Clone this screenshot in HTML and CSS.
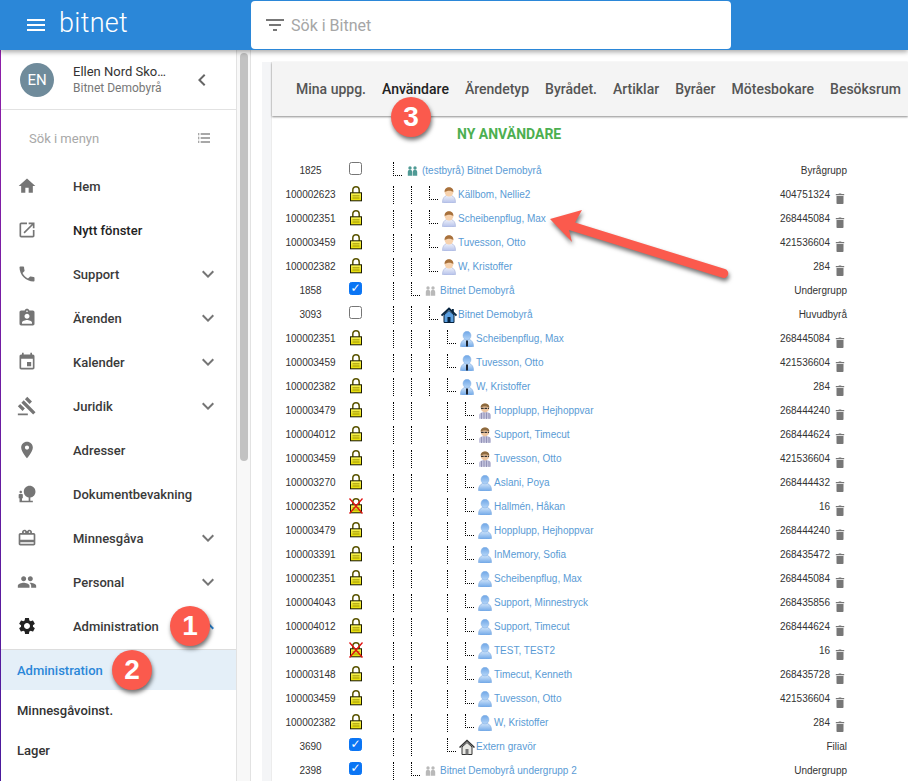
FILE: index.html
```html
<!DOCTYPE html>
<html lang="sv">
<head>
<meta charset="utf-8">
<title>bitnet</title>
<link rel="stylesheet" href="styles.css">
</head>
<body>
<svg class="defs" aria-hidden="true">
  <defs>
    <linearGradient id="gBlue" x1="0" y1="0" x2="0" y2="1"><stop offset="0" stop-color="#cfe3fa"/><stop offset="1" stop-color="#6fa8e8"/></linearGradient>
    <linearGradient id="gHead" x1="0" y1="0" x2="0" y2="1"><stop offset="0" stop-color="#6ea5e6"/><stop offset="1" stop-color="#b5d6f8"/></linearGradient>
    <linearGradient id="gBody" x1="0" y1="0" x2="0" y2="1"><stop offset="0" stop-color="#eef1fa"/><stop offset="1" stop-color="#b4c0ea"/></linearGradient>
    <linearGradient id="gLock" x1="0" y1="0" x2="0" y2="1"><stop offset="0" stop-color="#f8f35a"/><stop offset="1" stop-color="#e6dc00"/></linearGradient>
    <symbol id="lock" viewBox="0 0 14 16">
      <path d="M3.800 7V4C3.800 2 5 .8 7 .8s3.200 1.200 3.200 3.200V7" fill="none" stroke="#5a5400" stroke-width="1.500"/>
      <rect x="1.500" y="6.800" width="11" height="8" fill="url(#gLock)" stroke="#1a1a00"/>
      <path d="M3.500 9.800h7M3.500 12h7" stroke="#8a8200" stroke-width=".8"/>
    </symbol>
    <symbol id="lockx" viewBox="0 0 14 16">
      <use href="#lock" width="14" height="16"/>
      <path d="M.5.5l13 15M13.500.5L.5 15.500" stroke="#e01010" stroke-width="1.300"/>
    </symbol>
    <symbol id="uo" viewBox="0 0 16 16">
      <path d="M1.500 15.500c0-4 1.500-6 4-7h5c2.500 1 4 3 4 7-2 1-11 1-13 0z" fill="url(#gBody)" stroke="#a3aed8" stroke-width=".6"/>
      <ellipse cx="8" cy="5" rx="4.300" ry="4.600" fill="#f7d2ae"/>
      <path d="M3.700 5.300C3.200 1.800 5.600.3 8 .3s4.800 1.500 4.300 5C10.500 3.300 6 3.300 3.700 5.300z" fill="#a8713c"/>
    </symbol>
    <symbol id="ub" viewBox="0 0 16 16">
      <path d="M1.500 15.500c0-4 1.500-6 4-7h5c2.500 1 4 3 4 7-2 1-11 1-13 0z" fill="url(#gBlue)" stroke="#7aa9e0" stroke-width=".6"/>
      <ellipse cx="8" cy="4.600" rx="4" ry="4.400" fill="url(#gHead)" stroke="#7aa9e0" stroke-width=".4"/>
    </symbol>
    <symbol id="ut" viewBox="0 0 16 16">
      <use href="#ub" width="16" height="16"/>
      <path d="M8 9.500V15.500" stroke="#1c2430" stroke-width="2"/>
    </symbol>
    <symbol id="ug" viewBox="0 0 16 16">
      <path d="M2 15.800V12.500C2 10.300 4.500 9 8 9s6 1.300 6 3.500v3.300z" fill="#c3c3dc"/>
      <path d="M4.500 10v6M7 9.500V16M9.500 9.500V16M12 10v6" stroke="#8585ad" stroke-width=".8"/>
      <ellipse cx="8" cy="5" rx="4.300" ry="4.400" fill="#eec6a0"/>
      <path d="M3.700 4.500C3.500 1.700 5.800.4 8 .4s4.500 1.300 4.300 4.100C10 3 6 3 3.700 4.500z" fill="#8d6a3f"/>
      <path d="M4 5.400h8" stroke="#333" stroke-width="1.200" stroke-dasharray="2.700 .8"/>
    </symbol>
    <symbol id="grp" viewBox="0 0 11 10">
      <circle cx="3" cy="2" r="1.700" fill="currentColor"/><circle cx="8" cy="2" r="1.700" fill="currentColor"/>
      <path d="M.8 9.800V6c0-1.500 1-2.300 2.200-2.300S5.200 4.500 5.200 6v3.800zM5.800 9.800V6c0-1.500 1-2.300 2.200-2.300s2.200.8 2.200 2.300v3.800z" fill="currentColor"/>
    </symbol>
    <symbol id="hb" viewBox="0 0 16 16">
      <path d="M3 8v7.500h10V8L8 3.500z" fill="#5b9fe0" stroke="#06233f"/>
      <path d="M.5 8.500L8 1.500l7.500 7" fill="none" stroke="#06233f" stroke-width="1.800"/>
      <rect x="6.500" y="10" width="3" height="5.500" fill="#06233f"/>
      <rect x="11" y="2" width="1.800" height="3.500" fill="#06233f"/>
    </symbol>
    <symbol id="hg" viewBox="0 0 16 16">
      <path d="M3 8v7.500h10V8L8 3.500z" fill="#e8e8e4" stroke="#333"/>
      <path d="M.5 8.500L8 1.500l7.500 7" fill="none" stroke="#333" stroke-width="1.500"/>
      <rect x="6.500" y="10" width="3" height="5.500" fill="#777"/>
    </symbol>
    <symbol id="trash" viewBox="0 0 10 11">
      <path d="M1.500 3h7v7.200c0 .4-.3.800-.8.800H2.300c-.5 0-.8-.4-.8-.8zM.8 1h2.700l.4-.6h2.200l.4.600h2.700v1.200H.8z" fill="#777"/>
    </symbol>
    <symbol id="i-home" viewBox="0 0 24 24"><path d="M10 20v-6h4v6h5v-8h3L12 3 2 12h3v8z"/></symbol>
    <symbol id="i-open" viewBox="0 0 24 24"><path d="M19 19H5V5h7V3H5c-1.110 0-2 .9-2 2v14c0 1.100.89 2 2 2h14c1.100 0 2-.9 2-2v-7h-2v7zM14 3v2h3.590l-9.830 9.830 1.410 1.410L19 6.410V10h2V3h-7z"/></symbol>
    <symbol id="i-phone" viewBox="0 0 24 24"><path d="M6.620 10.790c1.440 2.830 3.760 5.140 6.590 6.590l2.200-2.200c.27-.27.67-.36 1.020-.24 1.120.37 2.330.57 3.570.57.55 0 1 .45 1 1V20c0 .55-.45 1-1 1-9.390 0-17-7.610-17-17 0-.55.45-1 1-1h3.500c.55 0 1 .45 1 1 0 1.250.2 2.450.57 3.570.11.35.03.74-.25 1.020l-2.200 2.200z"/></symbol>
    <symbol id="i-case" viewBox="0 0 24 24"><path d="M19 3h-4.180C14.400 1.840 13.300 1 12 1c-1.300 0-2.400.84-2.820 2H5c-1.100 0-2 .9-2 2v14c0 1.100.9 2 2 2h14c1.100 0 2-.9 2-2V5c0-1.100-.9-2-2-2zm-7 0c.55 0 1 .45 1 1s-.45 1-1 1-1-.45-1-1 .45-1 1-1zm0 4c1.660 0 3 1.340 3 3s-1.340 3-3 3-3-1.340-3-3 1.340-3 3-3zm6 12H6v-1.400c0-2 4-3.100 6-3.100s6 1.100 6 3.100V19z"/></symbol>
    <symbol id="i-event" viewBox="0 0 24 24"><path d="M17 12h-5v5h5v-5zM16 1v2H8V1H6v2H5c-1.110 0-1.990.9-1.990 2L3 19c0 1.100.89 2 2 2h14c1.100 0 2-.9 2-2V5c0-1.100-.9-2-2-2h-1V1h-2zm3 18H5V8h14v11z"/></symbol>
    <symbol id="i-gavel" viewBox="0 0 24 24"><path d="M1 21h12v2H1zM5.245 8.070l2.830-2.827 14.140 14.142-2.828 2.828zM12.317 1l5.657 5.656-2.830 2.830-5.654-5.660zM3.825 9.485l5.657 5.657-2.828 2.828-5.657-5.657z"/></symbol>
    <symbol id="i-place" viewBox="0 0 24 24"><path d="M12 2C8.130 2 5 5.130 5 9c0 5.250 7 13 7 13s7-7.750 7-13c0-3.870-3.130-7-7-7zm0 9.500c-1.380 0-2.500-1.120-2.500-2.500s1.120-2.500 2.500-2.500 2.500 1.120 2.500 2.500-1.120 2.500-2.500 2.500z"/></symbol>
    <symbol id="i-nature" viewBox="0 0 24 24"><path d="M22.170 9.170c0-3.870-3.130-7-7-7s-7 3.130-7 7c0 3.470 2.520 6.340 5.830 6.890V20H6v-3h1v-4c0-.55-.45-1-1-1H3c-.55 0-1 .45-1 1v4h1v5h16v-2h-3v-3.880c3.470-.41 6.170-3.360 6.170-6.950zM4.500 11c.83 0 1.500-.67 1.500-1.500S5.330 8 4.500 8 3 8.670 3 9.500 3.670 11 4.500 11z"/></symbol>
    <symbol id="i-gift" viewBox="0 0 24 24"><path d="M20 6h-2.180c.11-.31.18-.65.18-1 0-1.660-1.340-3-3-3-1.050 0-1.960.54-2.500 1.350l-.5.67-.5-.68C10.960 2.540 10.050 2 9 2 7.340 2 6 3.340 6 5c0 .35.07.69.18 1H4c-1.110 0-1.990.89-1.990 2L2 19c0 1.110.89 2 2 2h16c1.110 0 2-.89 2-2V8c0-1.110-.89-2-2-2zm-5-2c.55 0 1 .45 1 1s-.45 1-1 1-1-.45-1-1 .45-1 1-1zM9 4c.55 0 1 .45 1 1s-.45 1-1 1-1-.45-1-1 .45-1 1-1zm11 15H4v-2h16v2zm0-5H4V8h16v6z"/></symbol>
    <symbol id="i-people" viewBox="0 0 24 24"><path d="M16 11c1.660 0 2.990-1.340 2.990-3S17.660 5 16 5c-1.660 0-3 1.340-3 3s1.340 3 3 3zm-8 0c1.660 0 2.990-1.340 2.990-3S9.660 5 8 5C6.340 5 5 6.340 5 8s1.340 3 3 3zm0 2c-2.330 0-7 1.170-7 3.500V19h14v-2.500c0-2.330-4.670-3.500-7-3.500zm8 0c-.29 0-.62.02-.97.05 1.160.84 1.970 1.970 1.970 3.450V19h6v-2.500c0-2.330-4.670-3.500-7-3.500z"/></symbol>
    <symbol id="i-gear" viewBox="0 0 24 24"><path d="M19.140 12.940c.04-.3.060-.61.060-.94 0-.32-.02-.64-.07-.94l2.030-1.580c.18-.14.23-.41.12-.61l-1.920-3.320c-.12-.22-.37-.29-.59-.22l-2.390.96c-.5-.38-1.030-.7-1.620-.94l-.36-2.540c-.04-.24-.24-.41-.48-.41h-3.840c-.24 0-.43.17-.47.41l-.36 2.540c-.59.24-1.130.57-1.620.94l-2.390-.96c-.22-.08-.47 0-.59.22L2.740 8.870c-.12.21-.08.47.12.61l2.030 1.580c-.05.3-.09.63-.09.94s.02.64.07.94l-2.030 1.580c-.18.14-.23.41-.12.61l1.920 3.320c.12.22.37.29.59.22l2.390-.96c.5.38 1.030.7 1.620.94l.36 2.540c.05.24.24.41.48.41h3.840c.24 0 .44-.17.47-.41l.36-2.540c.59-.24 1.130-.56 1.620-.94l2.390.96c.22.08.47 0 .59-.22l1.920-3.320c.12-.22.07-.47-.12-.61l-2.010-1.580zM12 15.600c-1.980 0-3.600-1.620-3.600-3.600s1.620-3.600 3.600-3.600 3.600 1.620 3.600 3.600-1.620 3.600-3.600 3.600z"/></symbol>
    <symbol id="i-down" viewBox="0 0 24 24"><path d="M16.590 8.590L12 13.170 7.410 8.590 6 10l6 6 6-6z"/></symbol>
    <symbol id="i-up" viewBox="0 0 24 24"><path d="M12 8l-6 6 1.410 1.410L12 10.830l4.590 4.580L18 14z"/></symbol>
  </defs>
</svg>

<div class="app">
  <header class="topbar">
    <div class="brand">
      <svg class="menu-btn" viewBox="0 0 24 24"><path d="M3 18h18v-2H3v2zm0-5h18v-2H3v2zm0-7v2h18V6H3z"/></svg>
      <span class="logo">bitnet</span>
    </div>
    <div class="search">
      <svg class="filter" viewBox="0 0 24 24"><path d="M10 18h4v-2h-4v2zM3 6v2h18V6H3zm3 7h12v-2H6v2z"/></svg>
      <span>Sök i Bitnet</span>
    </div>
  </header>

  <div class="body">
    <aside class="sidebar">
      <div class="profile">
        <div class="avatar">EN</div>
        <div class="who">
          <div class="who-name">Ellen Nord Sko…</div>
          <div class="who-org">Bitnet Demobyrå</div>
        </div>
        <svg class="collapse" viewBox="0 0 24 24"><path d="M15.410 7.410L14 6l-6 6 6 6 1.410-1.410L10.830 12z"/></svg>
      </div>
      <div class="menu-search">
        <span>Sök i menyn</span>
        <svg class="list-ic" viewBox="0 0 24 24"><path d="M7 5h14v2H7zM7 11h14v2H7zM7 17h14v2H7zM3 5h2v2H3zM3 8.500h2v1H3zM3 11h2v2H3zM3 14.500h2v1H3zM3 17h2v2H3z"/></svg>
      </div>
      <nav class="nav">
        <a class="nav-item"><svg class="ni"><use href="#i-home"/></svg><span class="nt">Hem</span></a>
        <a class="nav-item"><svg class="ni"><use href="#i-open"/></svg><span class="nt strong">Nytt fönster</span></a>
        <a class="nav-item"><svg class="ni"><use href="#i-phone"/></svg><span class="nt">Support</span><svg class="chev"><use href="#i-down"/></svg></a>
        <a class="nav-item"><svg class="ni"><use href="#i-case"/></svg><span class="nt">Ärenden</span><svg class="chev"><use href="#i-down"/></svg></a>
        <a class="nav-item"><svg class="ni"><use href="#i-event"/></svg><span class="nt">Kalender</span><svg class="chev"><use href="#i-down"/></svg></a>
        <a class="nav-item"><svg class="ni"><use href="#i-gavel"/></svg><span class="nt">Juridik</span><svg class="chev"><use href="#i-down"/></svg></a>
        <a class="nav-item"><svg class="ni"><use href="#i-place"/></svg><span class="nt">Adresser</span></a>
        <a class="nav-item"><svg class="ni"><use href="#i-nature"/></svg><span class="nt">Dokumentbevakning</span></a>
        <a class="nav-item"><svg class="ni"><use href="#i-gift"/></svg><span class="nt">Minnesgåva</span><svg class="chev"><use href="#i-down"/></svg></a>
        <a class="nav-item"><svg class="ni"><use href="#i-people"/></svg><span class="nt">Personal</span><svg class="chev"><use href="#i-down"/></svg></a>
        <a class="nav-item open"><svg class="ni dark"><use href="#i-gear"/></svg><span class="nt">Administration</span><svg class="chev blue"><use href="#i-up"/></svg></a>
        <a class="sub active">Administration</a>
        <a class="sub">Minnesgåvoinst.</a>
        <a class="sub">Lager</a>
      </nav>
    </aside>
    <div class="scroll"><div class="thumb"></div></div>

    <main class="content">
      <div class="gutter"></div>
      <section class="panel">
        <div class="tabs">
          <span class="tab">Mina uppg.</span>
          <span class="tab on">Användare</span>
          <span class="tab">Ärendetyp</span>
          <span class="tab">Byrådet.</span>
          <span class="tab">Artiklar</span>
          <span class="tab">Byråer</span>
          <span class="tab">Mötesbokare</span>
          <span class="tab">Besöksrum</span>
        </div>
        <div class="new-user">NY ANVÄNDARE</div>
        <div class="tree">
          <div class="row"><span class="id">1825</span><span class="c"><span class="cb"></span></span><span class="t"><i class="e"></i><span class="ic"><svg class="grp teal"><use href="#grp"/></svg></span><a class="lnk">(testbyrå) Bitnet Demobyrå</a></span><span class="ty">Byrågrupp</span></div>
          <div class="row"><span class="id">100002623</span><span class="c"><svg class="lk"><use href="#lock"/></svg></span><span class="t"><i class="l"></i><i class="l"></i><i class="e"></i><span class="ic"><svg class="us"><use href="#uo"/></svg></span><a class="lnk">Källbom, Nellie2</a></span><span class="num">404751324</span><svg class="tr"><use href="#trash"/></svg></div>
          <div class="row"><span class="id">100002351</span><span class="c"><svg class="lk"><use href="#lock"/></svg></span><span class="t"><i class="l"></i><i class="l"></i><i class="e"></i><span class="ic"><svg class="us"><use href="#uo"/></svg></span><a class="lnk">Scheibenpflug, Max</a></span><span class="num">268445084</span><svg class="tr"><use href="#trash"/></svg></div>
          <div class="row"><span class="id">100003459</span><span class="c"><svg class="lk"><use href="#lock"/></svg></span><span class="t"><i class="l"></i><i class="l"></i><i class="e"></i><span class="ic"><svg class="us"><use href="#uo"/></svg></span><a class="lnk">Tuvesson, Otto</a></span><span class="num">421536604</span><svg class="tr"><use href="#trash"/></svg></div>
          <div class="row"><span class="id">100002382</span><span class="c"><svg class="lk"><use href="#lock"/></svg></span><span class="t"><i class="l"></i><i class="l"></i><i class="e"></i><span class="ic"><svg class="us"><use href="#uo"/></svg></span><a class="lnk">W, Kristoffer</a></span><span class="num">284</span><svg class="tr"><use href="#trash"/></svg></div>
          <div class="row"><span class="id">1858</span><span class="c"><span class="cb on">✓</span></span><span class="t"><i class="l"></i><i class="e"></i><span class="ic"><svg class="grp grey"><use href="#grp"/></svg></span><a class="lnk">Bitnet Demobyrå</a></span><span class="ty">Undergrupp</span></div>
          <div class="row"><span class="id">3093</span><span class="c"><span class="cb"></span></span><span class="t"><i class="l"></i><i class="l"></i><i class="e"></i><span class="ic"><svg class="us"><use href="#hb"/></svg></span><a class="lnk">Bitnet Demobyrå</a></span><span class="ty">Huvudbyrå</span></div>
          <div class="row"><span class="id">100002351</span><span class="c"><svg class="lk"><use href="#lock"/></svg></span><span class="t"><i class="l"></i><i class="l"></i><i class="l"></i><i class="e"></i><span class="ic"><svg class="us"><use href="#ut"/></svg></span><a class="lnk">Scheibenpflug, Max</a></span><span class="num">268445084</span><svg class="tr"><use href="#trash"/></svg></div>
          <div class="row"><span class="id">100003459</span><span class="c"><svg class="lk"><use href="#lock"/></svg></span><span class="t"><i class="l"></i><i class="l"></i><i class="l"></i><i class="e"></i><span class="ic"><svg class="us"><use href="#ut"/></svg></span><a class="lnk">Tuvesson, Otto</a></span><span class="num">421536604</span><svg class="tr"><use href="#trash"/></svg></div>
          <div class="row"><span class="id">100002382</span><span class="c"><svg class="lk"><use href="#lock"/></svg></span><span class="t"><i class="l"></i><i class="l"></i><i class="l"></i><i class="e"></i><span class="ic"><svg class="us"><use href="#ut"/></svg></span><a class="lnk">W, Kristoffer</a></span><span class="num">284</span><svg class="tr"><use href="#trash"/></svg></div>
          <div class="row"><span class="id">100003479</span><span class="c"><svg class="lk"><use href="#lock"/></svg></span><span class="t"><i class="l"></i><i class="l"></i><i class="b"></i><i class="l"></i><i class="e"></i><span class="ic"><svg class="us"><use href="#ug"/></svg></span><a class="lnk">Hopplupp, Hejhoppvar</a></span><span class="num">268444240</span><svg class="tr"><use href="#trash"/></svg></div>
          <div class="row"><span class="id">100004012</span><span class="c"><svg class="lk"><use href="#lock"/></svg></span><span class="t"><i class="l"></i><i class="l"></i><i class="b"></i><i class="l"></i><i class="e"></i><span class="ic"><svg class="us"><use href="#ug"/></svg></span><a class="lnk">Support, Timecut</a></span><span class="num">268444624</span><svg class="tr"><use href="#trash"/></svg></div>
          <div class="row"><span class="id">100003459</span><span class="c"><svg class="lk"><use href="#lock"/></svg></span><span class="t"><i class="l"></i><i class="l"></i><i class="b"></i><i class="l"></i><i class="e"></i><span class="ic"><svg class="us"><use href="#ug"/></svg></span><a class="lnk">Tuvesson, Otto</a></span><span class="num">421536604</span><svg class="tr"><use href="#trash"/></svg></div>
          <div class="row"><span class="id">100003270</span><span class="c"><svg class="lk"><use href="#lock"/></svg></span><span class="t"><i class="l"></i><i class="l"></i><i class="b"></i><i class="l"></i><i class="e"></i><span class="ic"><svg class="us"><use href="#ub"/></svg></span><a class="lnk">Aslani, Poya</a></span><span class="num">268444432</span><svg class="tr"><use href="#trash"/></svg></div>
          <div class="row"><span class="id">100002352</span><span class="c"><svg class="lk"><use href="#lockx"/></svg></span><span class="t"><i class="l"></i><i class="l"></i><i class="b"></i><i class="l"></i><i class="e"></i><span class="ic"><svg class="us"><use href="#ub"/></svg></span><a class="lnk">Hallmén, Håkan</a></span><span class="num">16</span><svg class="tr"><use href="#trash"/></svg></div>
          <div class="row"><span class="id">100003479</span><span class="c"><svg class="lk"><use href="#lock"/></svg></span><span class="t"><i class="l"></i><i class="l"></i><i class="b"></i><i class="l"></i><i class="e"></i><span class="ic"><svg class="us"><use href="#ub"/></svg></span><a class="lnk">Hopplupp, Hejhoppvar</a></span><span class="num">268444240</span><svg class="tr"><use href="#trash"/></svg></div>
          <div class="row"><span class="id">100003391</span><span class="c"><svg class="lk"><use href="#lock"/></svg></span><span class="t"><i class="l"></i><i class="l"></i><i class="b"></i><i class="l"></i><i class="e"></i><span class="ic"><svg class="us"><use href="#ub"/></svg></span><a class="lnk">InMemory, Sofia</a></span><span class="num">268435472</span><svg class="tr"><use href="#trash"/></svg></div>
          <div class="row"><span class="id">100002351</span><span class="c"><svg class="lk"><use href="#lock"/></svg></span><span class="t"><i class="l"></i><i class="l"></i><i class="b"></i><i class="l"></i><i class="e"></i><span class="ic"><svg class="us"><use href="#ub"/></svg></span><a class="lnk">Scheibenpflug, Max</a></span><span class="num">268445084</span><svg class="tr"><use href="#trash"/></svg></div>
          <div class="row"><span class="id">100004043</span><span class="c"><svg class="lk"><use href="#lock"/></svg></span><span class="t"><i class="l"></i><i class="l"></i><i class="b"></i><i class="l"></i><i class="e"></i><span class="ic"><svg class="us"><use href="#ub"/></svg></span><a class="lnk">Support, Minnestryck</a></span><span class="num">268435856</span><svg class="tr"><use href="#trash"/></svg></div>
          <div class="row"><span class="id">100004012</span><span class="c"><svg class="lk"><use href="#lock"/></svg></span><span class="t"><i class="l"></i><i class="l"></i><i class="b"></i><i class="l"></i><i class="e"></i><span class="ic"><svg class="us"><use href="#ub"/></svg></span><a class="lnk">Support, Timecut</a></span><span class="num">268444624</span><svg class="tr"><use href="#trash"/></svg></div>
          <div class="row"><span class="id">100003689</span><span class="c"><svg class="lk"><use href="#lockx"/></svg></span><span class="t"><i class="l"></i><i class="l"></i><i class="b"></i><i class="l"></i><i class="e"></i><span class="ic"><svg class="us"><use href="#ub"/></svg></span><a class="lnk">TEST, TEST2</a></span><span class="num">16</span><svg class="tr"><use href="#trash"/></svg></div>
          <div class="row"><span class="id">100003148</span><span class="c"><svg class="lk"><use href="#lock"/></svg></span><span class="t"><i class="l"></i><i class="l"></i><i class="b"></i><i class="l"></i><i class="e"></i><span class="ic"><svg class="us"><use href="#ub"/></svg></span><a class="lnk">Timecut, Kenneth</a></span><span class="num">268435728</span><svg class="tr"><use href="#trash"/></svg></div>
          <div class="row"><span class="id">100003459</span><span class="c"><svg class="lk"><use href="#lock"/></svg></span><span class="t"><i class="l"></i><i class="l"></i><i class="b"></i><i class="l"></i><i class="e"></i><span class="ic"><svg class="us"><use href="#ub"/></svg></span><a class="lnk">Tuvesson, Otto</a></span><span class="num">421536604</span><svg class="tr"><use href="#trash"/></svg></div>
          <div class="row"><span class="id">100002382</span><span class="c"><svg class="lk"><use href="#lock"/></svg></span><span class="t"><i class="l"></i><i class="l"></i><i class="b"></i><i class="l"></i><i class="e"></i><span class="ic"><svg class="us"><use href="#ub"/></svg></span><a class="lnk">W, Kristoffer</a></span><span class="num">284</span><svg class="tr"><use href="#trash"/></svg></div>
          <div class="row"><span class="id">3690</span><span class="c"><span class="cb on">✓</span></span><span class="t"><i class="l"></i><i class="l"></i><i class="b"></i><i class="e"></i><span class="ic"><svg class="us"><use href="#hg"/></svg></span><a class="lnk">Extern gravör</a></span><span class="ty">Filial</span></div>
          <div class="row"><span class="id">2398</span><span class="c"><span class="cb on">✓</span></span><span class="t"><i class="l"></i><i class="e"></i><span class="ic"><svg class="grp grey"><use href="#grp"/></svg></span><a class="lnk">Bitnet Demobyrå undergrupp 2</a></span><span class="ty">Undergrupp</span></div>
        </div>
      </section>
    </main>
  </div>

  <svg class="arrow" viewBox="0 0 190 80" aria-hidden="true">
    <path d="M6 11L38 2 31 14.500 181 61a4.600 4.600 0 0 1-2.700 8.800L25 22l3 12z" fill="#fb5a4d"/>
  </svg>
  <div class="badge b1">1</div>
  <div class="badge b2">2</div>
  <div class="badge b3">3</div>
</div>
</body>
</html>
```

FILE: styles.css
```css
* { box-sizing: border-box; }
html, body { margin: 0; height: 100%; overflow: hidden; background: #fff; }
body { font-family: Roboto, "Liberation Sans", sans-serif; color: #333; }
.defs { position: absolute; width: 0; height: 0; }
.app { position: relative; width: 908px; height: 781px; overflow: hidden; display: flex; flex-direction: column; }

.topbar { height: 50px; flex: none; background: #2b87d8; display: flex; align-items: center; box-shadow: 0 2px 5px rgba(0,0,0,.35); position: relative; z-index: 3; }
.brand { width: 251px; display: flex; align-items: center; }
.menu-btn { width: 24px; height: 24px; fill: #fff; margin-left: 24px; }
.logo { margin-left: 11px; font-size: 27px; color: #fff; font-weight: 300; letter-spacing: .3px; line-height: 50px; position: relative; top: -2px; }
.search { width: 480px; height: 48px; background: #fff; border-radius: 4px; display: flex; align-items: center; color: #a6a6a6; font-size: 16px; }
.filter { width: 24px; height: 24px; fill: #777; margin: 0 4px 0 12px; }

.body { flex: 1; display: flex; min-height: 0; border-left: 1px solid #7a1fa2; border-image: linear-gradient(#8e1fa8, #4a1a9c) 1; }
.sidebar { width: 236px; flex: none; border-right: 1px solid #e2e2e2; background: #fff; }
.profile { height: 60px; border-bottom: 1px solid #e2e2e2; display: flex; align-items: center; position: relative; }
.avatar { width: 34px; height: 34px; border-radius: 50%; background: #6f8b9b; color: #fff; font-size: 15px; display: flex; align-items: center; justify-content: center; margin-left: 19px; }
.who { margin-left: 19px; width: 109px; padding-top: 1px; }
.who-name { font-size: 13px; line-height: 16px; color: #333; }
.who-org { font-size: 12px; line-height: 17px; color: #777; }
.collapse { width: 24px; height: 24px; fill: #666; margin-left: 8px; }
.menu-search { height: 54px; display: flex; align-items: center; padding-left: 28px; color: #a8a8a8; font-size: 13px; position: relative; top: 1px; }
.list-ic { width: 16px; height: 16px; fill: #8c8c8c; margin-left: 97px; }

.nav-item { height: 44px; display: flex; align-items: center; font-size: 13px; font-weight: 500; color: #3a3a3a; position: relative; }
.ni { width: 20px; height: 20px; fill: #757575; margin-left: 16px; flex: none; }
.ni.dark { fill: #222; }
.nt { margin-left: 36px; }
.nt.strong { color: #222; }
.chev { width: 24px; height: 24px; fill: #757575; position: absolute; left: 195px; top: 10px; }
.chev.blue { fill: #2b87d8; }
.nav-item.open { height: 45px; padding-bottom: 1px; }
.sub { display: flex; align-items: center; height: 40px; padding-left: 16px; font-size: 13px; font-weight: 500; color: #333; }
.sub.active { height: 41px; background: #e4eff8; color: #2b87d8; border-top: 1px solid #ddd; }

.scroll { width: 14px; flex: none; background: #f8f8f8; border-right: 1px solid #e2e2e2; padding: 3px 2px 0 3px; }
.thumb { width: 8px; height: 408px; border-radius: 4px; background: #c2c2c2; }

.content { flex: 1; display: flex; padding: 12px 0 0 11px; min-width: 0; }
.gutter { width: 10px; flex: none; background: #f4f5f7; border-right: 1px solid #ececec; }
.panel { flex: 1; min-width: 0; }
.tabs { height: 54px; background: #f4f4f4; box-shadow: 0 1px 2px rgba(0,0,0,.45); display: flex; align-items: center; gap: 16px; padding-left: 24px; font-size: 14px; font-weight: 500; color: #555; white-space: nowrap; overflow: hidden; }
.tab.on { color: #222; }
.new-user { height: 42px; padding: 10px 0 0 185px; font-size: 14px; line-height: 16px; font-weight: 700; color: #4caf50; }

.tree { font: 10px "Liberation Sans", Arial, sans-serif; color: #333; }
.row { height: 24px; display: flex; align-items: center; padding-right: 61px; }
.id { width: 77px; text-align: center; flex: none; }
.c { width: 44px; flex: none; display: flex; align-items: flex-start; height: 24px; padding-top: 4px; }
.cb { width: 13px; height: 13px; border: 1px solid #767676; border-radius: 2.500px; background: #fff; color: #fff; font: 700 12px/11px "DejaVu Sans", sans-serif; text-align: center; overflow: hidden; }
.cb.on { background: #0b75f4; border-color: #0b75f4; }
.lk { width: 14px; height: 16px; }
.t { flex: 1; display: flex; align-items: flex-start; height: 24px; min-width: 0; }
.l, .b { width: 18px; height: 18px; margin-top: 4px; flex: none; }
.l { border-left: 1px dotted #000; }
.e { width: 9px; height: 14px; margin: 4px 3px 0 0; flex: none; border-left: 1px dotted #000; border-bottom: 1px dotted #000; }
.ic { width: 17px; height: 24px; flex: none; display: flex; align-items: center; padding-top: 2px; }
.us { width: 16px; height: 16px; }
.grp { width: 11px; height: 10px; margin-left: 2px; }
.teal { color: #4f9a95; }
.grey { color: #b9b9b9; }
.lnk { color: #5a9bd5; line-height: 26px; white-space: nowrap; }
.num { text-align: right; }
.tr { width: 10px; height: 11px; margin: 8px 2px 0 5px; flex: none; }

.arrow { position: absolute; left: 544px; top: 208px; width: 190px; height: 80px; filter: drop-shadow(1px 3px 2px rgba(0,0,0,.55)); z-index: 4; }
.badge { position: absolute; width: 40px; height: 40px; border-radius: 50%; background: #fb5a4d; color: #fff; font: 700 28px/40px "Liberation Sans", Arial, sans-serif; text-align: center; box-shadow: 1px 3px 4px rgba(0,0,0,.55); z-index: 5; }
.b1 { left: 170px; top: 606px; }
.b2 { left: 112px; top: 650px; }
.b3 { left: 391px; top: 97px; }
```
